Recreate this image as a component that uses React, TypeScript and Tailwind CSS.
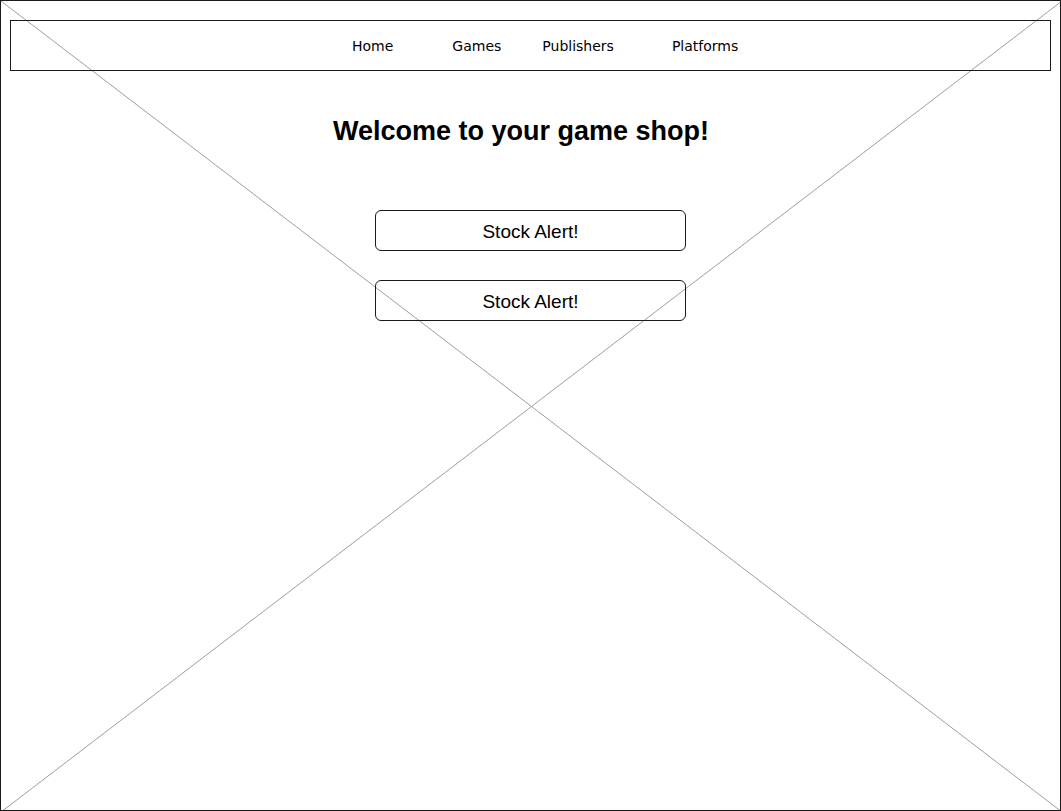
const navItems = [
  { label: "Home", gap: "ml-0" },
  { label: "Games", gap: "ml-[59px]" },
  { label: "Publishers", gap: "ml-[41px]" },
  { label: "Platforms", gap: "ml-[58px]" },
];

export default function App() {
  return (
    <div className="relative w-[1061px] h-[811px] overflow-hidden bg-white border border-[#1a1a1a]">
      {/* placeholder cross */}
      <svg
        className="absolute inset-0 pointer-events-none"
        width="1061"
        height="811"
        viewBox="0 0 1061 811"
      >
        <line x1="0" y1="0" x2="1061" y2="811" stroke="#9e9e9e" strokeWidth="1" />
        <line x1="1061" y1="0" x2="0" y2="811" stroke="#9e9e9e" strokeWidth="1" />
      </svg>

      {/* Nav */}
      <nav className="relative mx-[9px] mt-[19px] h-[51px] border border-[#1a1a1a] flex items-center pl-[341px] pt-[1px] font-['DejaVu_Sans',sans-serif] text-[14px] text-black">
        {navItems.map((item) => (
          <span key={item.label} className={item.gap}>
            {item.label}
          </span>
        ))}
      </nav>

      {/* Content */}
      <div className="relative flex flex-col items-center font-['Liberation_Sans',Arial,sans-serif]">
        <h1 className="mt-[45px] mr-[19px] h-[30px] leading-[30px] text-[27px] font-bold text-black">
          Welcome to your game shop!
        </h1>

        <button className="mt-[64px] w-[311px] h-[41px] pt-[3px] rounded-[6px] border border-[#1a1a1a] bg-transparent text-[19px] text-black">
          Stock Alert!
        </button>
        <button className="mt-[29px] w-[311px] h-[41px] pt-[3px] rounded-[6px] border border-[#1a1a1a] bg-transparent text-[19px] text-black">
          Stock Alert!
        </button>
      </div>
    </div>
  );
}
